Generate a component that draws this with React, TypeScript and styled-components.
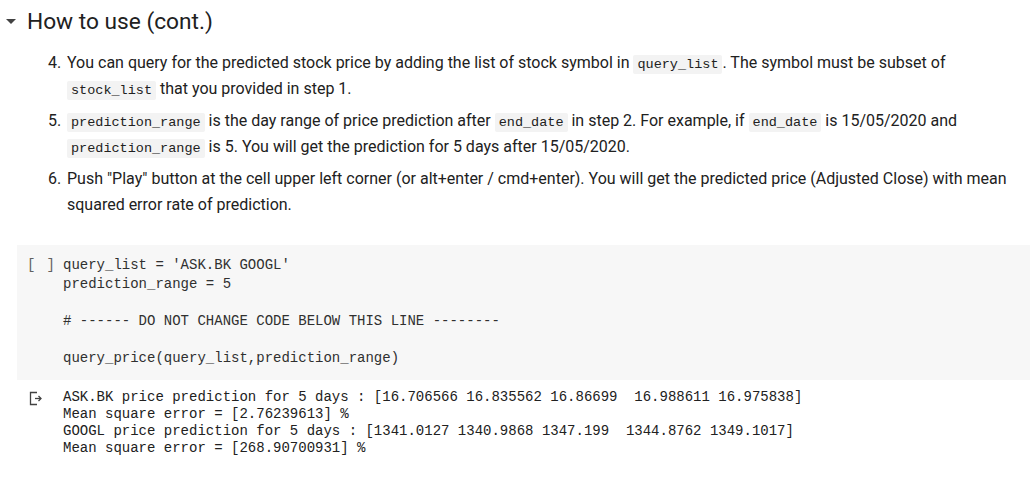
import React from "react";
import styled, { createGlobalStyle } from "styled-components";

const Global = createGlobalStyle`
  html, body { margin: 0; padding: 0; background: #ffffff; }
  body { font-family: Roboto, "Noto Sans", Arial, sans-serif; color: #212121; }
`;

const Page = styled.div`
  width: 1030px;
  height: 482px;
  overflow: hidden;
  display: flex;
  flex-direction: column;
`;

const Header = styled.div`
  display: flex;
  align-items: center;
  height: 42px;
  padding-left: 5px;
  gap: 10px;
`;

const Title = styled.h2`
  margin: 0;
  font-family: Roboto, Arial, sans-serif;
  font-weight: 400;
  font-size: 22.7px;
  color: #212121;
`;

const Steps = styled.ol`
  margin: 8px 0 0 0;
  padding: 0 0 0 48px;
  width: 1010px;
  box-sizing: border-box;
  font-size: 16px;
  line-height: 26px;
  color: #212121;
  list-style: none;
`;

const Step = styled.li`
  display: flex;
  margin-bottom: 6px;
`;

const Num = styled.span`
  flex: none;
  width: 19px;
`;

const Body = styled.span`
  flex: 1;
`;

const Inline = styled.code`
  font-family: "Liberation Mono", "DejaVu Sans Mono", monospace;
  font-size: 13.5px;
  line-height: 1;
  background: #f3f3f3;
  padding: 2px 4px;
  border-radius: 2px;
  color: #212121;
`;

const Cell = styled.div`
  margin: 21px 0 0 17px;
  background: #f7f7f7;
  display: flex;
  padding: 11px 0 12px 0;
`;

const Gutter = styled.div`
  width: 46px;
  flex: none;
  display: flex;
  gap: 11px;
  height: 18.6px;
  align-items: center;
  font-family: "Liberation Mono", monospace;
  font-size: 14px;
  line-height: 18.6px;
  color: #616161;
  padding-left: 10px;
  box-sizing: border-box;
`;

const Code = styled.pre`
  margin: 0;
  font-family: "Liberation Mono", "DejaVu Sans Mono", monospace;
  font-size: 14px;
  line-height: 18.6px;
  color: #303030;
`;

const Output = styled.div`
  display: flex;
  padding-top: 9px;
`;

const OutIcon = styled.div`
  width: 63px;
  flex: none;
  display: flex;
  justify-content: flex-start;
  padding-left: 28px;
  box-sizing: border-box;
  padding-top: 1px;
`;

const OutText = styled.pre`
  margin: 0;
  font-family: "Liberation Mono", "DejaVu Sans Mono", monospace;
  font-size: 14px;
  line-height: 17px;
  color: #212121;
`;

const Caret = () => (
  <svg width="12" height="12" viewBox="0 0 12 12">
    <path d="M1 4 L11 4 L6 9 Z" fill="#424242" />
  </svg>
);

const OutputGlyph = () => (
  <svg width="16" height="16" viewBox="0 0 16 16" fill="none" stroke="#424242" strokeWidth="1.3">
    <path d="M9 2.5 H2.5 V14.5 H9" />
    <path d="M7 8.5 H13" />
    <path d="M10.5 6 L13 8.5 L10.5 11" />
  </svg>
);

export default function App() {
  return (
    <Page>
      <Global />
      <Header>
        <Caret />
        <Title>How to use (cont.)</Title>
      </Header>
      <Steps>
        <Step>
          <Num>4.</Num>
          <Body>
            You can query for the predicted stock price by adding the list of stock symbol in{" "}
            <Inline>query_list</Inline>. The symbol must be subset of <Inline>stock_list</Inline> that you
            provided in step 1.
          </Body>
        </Step>
        <Step>
          <Num>5.</Num>
          <Body>
            <Inline>prediction_range</Inline> is the day range of price prediction after{" "}
            <Inline>end_date</Inline> in step 2. For example, if <Inline>end_date</Inline> is 15/05/2020 and{" "}
            <Inline>prediction_range</Inline> is 5. You will get the prediction for 5 days after 15/05/2020.
          </Body>
        </Step>
        <Step>
          <Num>6.</Num>
          <Body>
            Push "Play" button at the cell upper left corner (or alt+enter / cmd+enter). You will get the
            predicted price (Adjusted Close) with mean squared error rate of prediction.
          </Body>
        </Step>
      </Steps>
      <Cell>
        <Gutter>
          <span>[</span>
          <span>]</span>
        </Gutter>
        <Code>{`query_list = 'ASK.BK GOOGL'
prediction_range = 5

# ------ DO NOT CHANGE CODE BELOW THIS LINE --------

query_price(query_list,prediction_range)`}</Code>
      </Cell>
      <Output>
        <OutIcon>
          <OutputGlyph />
        </OutIcon>
        <OutText>{`ASK.BK price prediction for 5 days : [16.706566 16.835562 16.86699  16.988611 16.975838]
Mean square error = [2.76239613] %
GOOGL price prediction for 5 days : [1341.0127 1340.9868 1347.199  1344.8762 1349.1017]
Mean square error = [268.90700931] %`}</OutText>
      </Output>
    </Page>
  );
}
